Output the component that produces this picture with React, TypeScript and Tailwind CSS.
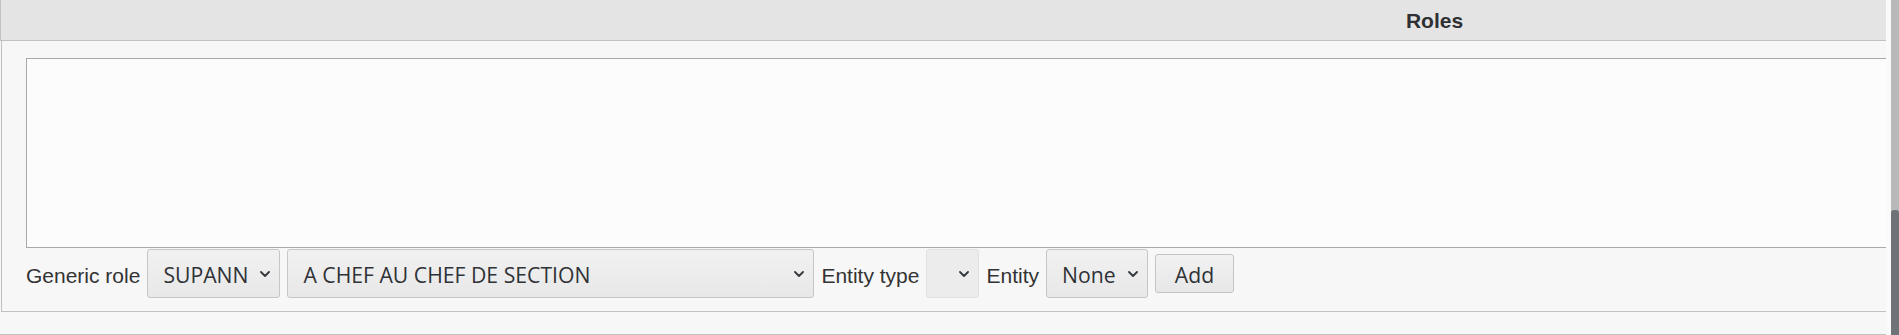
import React from "react";

function Chevron() {
  return (
    <svg width="10" height="6" viewBox="0 0 10 6" className="shrink-0">
      <path d="M1 1 L5 5 L9 1" fill="none" stroke="#34373b" strokeWidth="1.8" strokeLinecap="round" strokeLinejoin="round" />
    </svg>
  );
}

function FakeSelect({ label, width, disabled }: { label: string; width: string; disabled?: boolean }) {
  const base = disabled
    ? "border-[#e1e1e1] bg-[#ececec]"
    : "border-[#c6c6c6] bg-gradient-to-b from-[#f1f1f1] to-[#e8e8e9]";
  return (
    <div
      className={`flex h-[49px] shrink-0 items-center justify-between rounded-[3px] border pl-[15px] pr-[9px] ${base} ${width}`}
    >
      <span className="pt-[2px] font-['Open_Sans',sans-serif] text-[21.2px] leading-none text-[#2f3236] whitespace-nowrap">
        {label}
      </span>
      <Chevron />
    </div>
  );
}

function Label({ children }: { children: React.ReactNode }) {
  return (
    <span className="shrink-0 pt-[3px] font-['Liberation_Sans',Arial,sans-serif] text-[21px] leading-none text-[#333333] whitespace-nowrap">
      {children}
    </span>
  );
}

export default function App() {
  return (
    <div className="flex h-[335px] w-full overflow-hidden bg-[#f9f9f9]">
      <div className="min-w-0 flex-1 overflow-hidden bg-[#f7f7f7]">
        <div className="w-[2868px]">
          <div className="flex h-[41px] items-center justify-center border-b border-l border-[#c1c1c1] bg-[#e4e4e4] pt-[1px] font-['Liberation_Sans',Arial,sans-serif] text-[21px] font-bold text-[#2e3033]">
            Roles
          </div>
          <div className="ml-px border-b border-l border-[#c1c1c1] bg-[#f7f7f7] pb-[13px] pl-[24px] pt-[17px]">
            <div className="h-[190px] w-[2800px] border border-[#a9a9a9] bg-[#fcfcfc]" />
            <div className="mt-px flex items-center gap-[7px]">
              <Label>Generic role</Label>
              <FakeSelect label="SUPANN" width="w-[133px]" />
              <FakeSelect label="A CHEF AU CHEF DE SECTION" width="w-[527px]" />
              <Label>Entity type</Label>
              <FakeSelect label="" width="w-[53px]" disabled />
              <Label>Entity</Label>
              <FakeSelect label="None" width="w-[102px]" />
              <button className="flex h-[39px] w-[79px] shrink-0 items-center justify-center rounded-[3px] border border-[#c4c4c4] bg-gradient-to-b from-[#f2f2f2] to-[#e7e7e7] pt-[2px] font-['Open_Sans',sans-serif] text-[21.2px] leading-none text-[#2f3236]">
                Add
              </button>
            </div>
          </div>
          <div className="mt-[22px] h-[10px] border-t border-[#c1c1c1]" />
        </div>
      </div>
      <div className="flex w-[13px] shrink-0">
        <div className="w-[5px] bg-[#fafafa]" />
        <div className="flex w-[8px] flex-col bg-[#b9b9b9]">
          <div className="h-[210px]" />
          <div className="flex-1 rounded-t-[3px] bg-[#6f7378]" />
        </div>
      </div>
    </div>
  );
}
